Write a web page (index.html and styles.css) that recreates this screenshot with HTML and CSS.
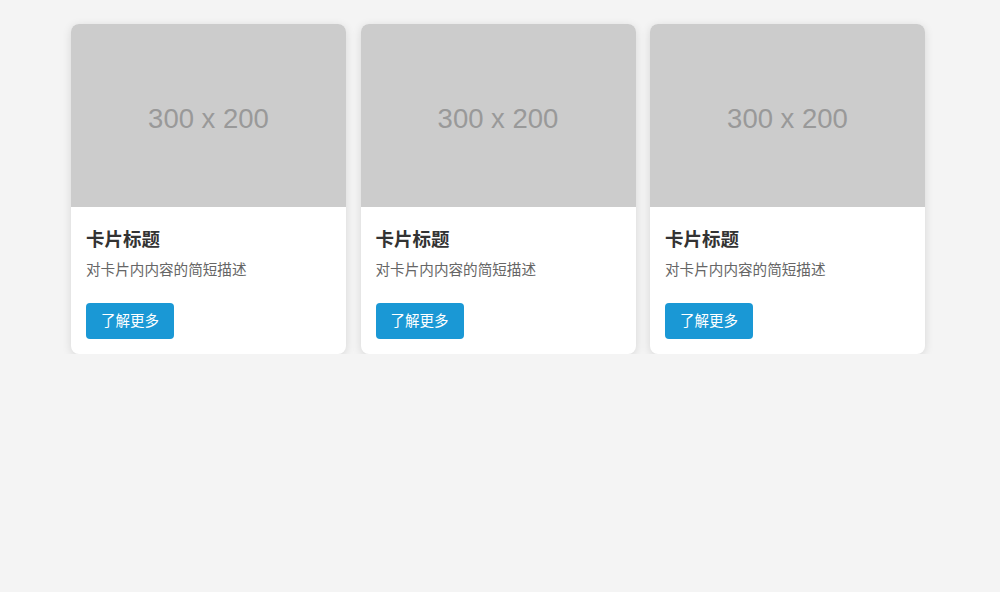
FILE: index.html
```html
<!DOCTYPE html>
<html lang="zh-CN">
<head>
    <meta charset="UTF-8">
    <meta name="viewport" content="width=device-width, initial-scale=1.0">
    <title>卡片</title>
    <link rel="stylesheet" href="styles.css">
</head>
<body>
    <div class="card-list">
        <div class="card">
            <div class="card-image">300 x 200</div>
            <div class="card-body">
                <h3>卡片标题</h3>
                <p>对卡片内内容的简短描述</p>
                <button>了解更多</button>
            </div>
        </div>
        <div class="card">
            <div class="card-image">300 x 200</div>
            <div class="card-body">
                <h3>卡片标题</h3>
                <p>对卡片内内容的简短描述</p>
                <button>了解更多</button>
            </div>
        </div>
        <div class="card">
            <div class="card-image">300 x 200</div>
            <div class="card-body">
                <h3>卡片标题</h3>
                <p>对卡片内内容的简短描述</p>
                <button>了解更多</button>
            </div>
        </div>
    </div>
</body>
</html>
```

FILE: styles.css
```css
body {
    margin: 0;
    background-color: #f4f4f4;
    font-family: "Liberation Sans", "Noto Sans CJK SC", sans-serif;
}
.card-list {
    display: grid;
    grid-template-columns: repeat(3, 275px);
    gap: 14.5px;
    padding: 24px 0 0 71px;
}
.card {
    background: white;
    border-radius: 8px;
    overflow: hidden;
    box-shadow: 0 2px 10px rgba(0,0,0,0.12);
}
.card-image {
    height: 177px;
    padding-top: 6px;
    background: #cccccc;
    color: #999999;
    font-size: 27.5px;
    display: flex;
    align-items: center;
    justify-content: center;
}
.card-body {
    padding: 15px;
}
.card-body h3 {
    margin: 3px 0 7px;
    font-size: 18.5px;
    color: #333;
}
.card-body p {
    margin: 0 0 24px;
    font-size: 14.6px;
    color: #666;
}
.card-body button {
    padding: 8px 15px;
    font-family: inherit;
    font-size: 14.5px;
    line-height: 20px;
    background: #1a98d5;
    color: white;
    border: none;
    border-radius: 4px;
    cursor: pointer;
}
```
